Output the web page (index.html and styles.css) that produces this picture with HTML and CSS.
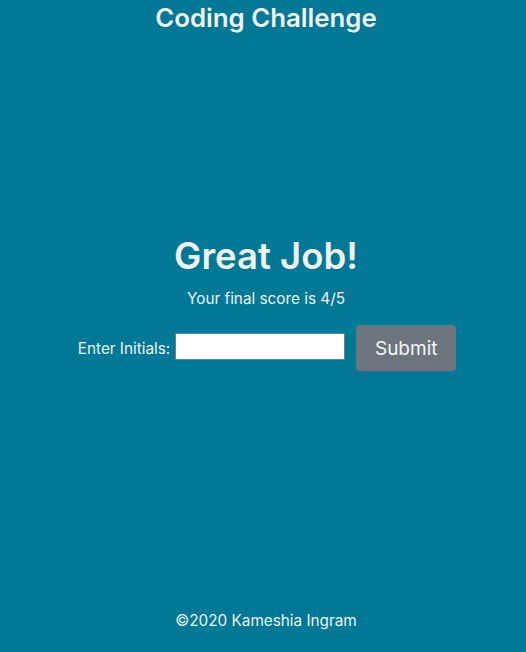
FILE: index.html
```html
<!DOCTYPE html>
<html lang="en">
<head>
<meta charset="utf-8">
<title>Coding Challenge</title>
<link rel="stylesheet" href="styles.css">
</head>
<body>
<div class="page">
  <header class="header"><h1 class="title">Coding Challenge</h1></header>
  <main class="main">
    <h2 class="done">Great Job!</h2>
    <p class="score">Your final score is 4/5</p>
    <form class="form">
      <label class="label" for="initials">Enter Initials:</label>
      <input class="input" id="initials" type="text">
      <button class="btn" type="button">Submit</button>
    </form>
  </main>
  <footer class="footer">©2020 Kameshia Ingram</footer>
</div>
</body>
</html>
```
FILE: styles.css
```css
html, body {
  margin: 0;
  padding: 0;
  background: #007896;
}
body {
  font-family: Inter, "Helvetica Neue", Arial, sans-serif;
  color: #f1f1f1;
}
.page {
  box-sizing: border-box;
  height: 652px;
  padding-left: 6px;
  display: flex;
  flex-direction: column;
  align-items: center;
}
.header {
  padding-top: 3px;
}
.title {
  margin: 0;
  font-size: 25.8px;
  font-weight: 600;
  line-height: 30px;
}
.main {
  margin-top: 200px;
  display: flex;
  flex-direction: column;
  align-items: center;
}
.done {
  margin: 0;
  font-size: 36.5px;
  font-weight: 600;
  line-height: 46px;
}
.score {
  margin: 10px 0 0;
  font-size: 15.3px;
  line-height: 20px;
}
.form {
  margin-top: 16px;
  display: flex;
  align-items: center;
  margin-left: 2px;
}
.label {
  font-size: 15.3px;
  margin-right: 5px;
}
.input {
  box-sizing: border-box;
  width: 170px;
  height: 27px;
  padding: 1px;
  border: 1px solid #7a7a7a;
  background: #fff;
  margin: 0 0 4px;
}
.btn {
  margin-left: 11px;
  width: 100px;
  height: 46px;
  border: none;
  border-radius: 4px;
  background: #6c757d;
  color: #f6f6f6;
  font-family: inherit;
  font-size: 19px;
}
.footer {
  margin-top: auto;
  margin-bottom: 21px;
  font-size: 15.3px;
  line-height: 20px;
}
```
